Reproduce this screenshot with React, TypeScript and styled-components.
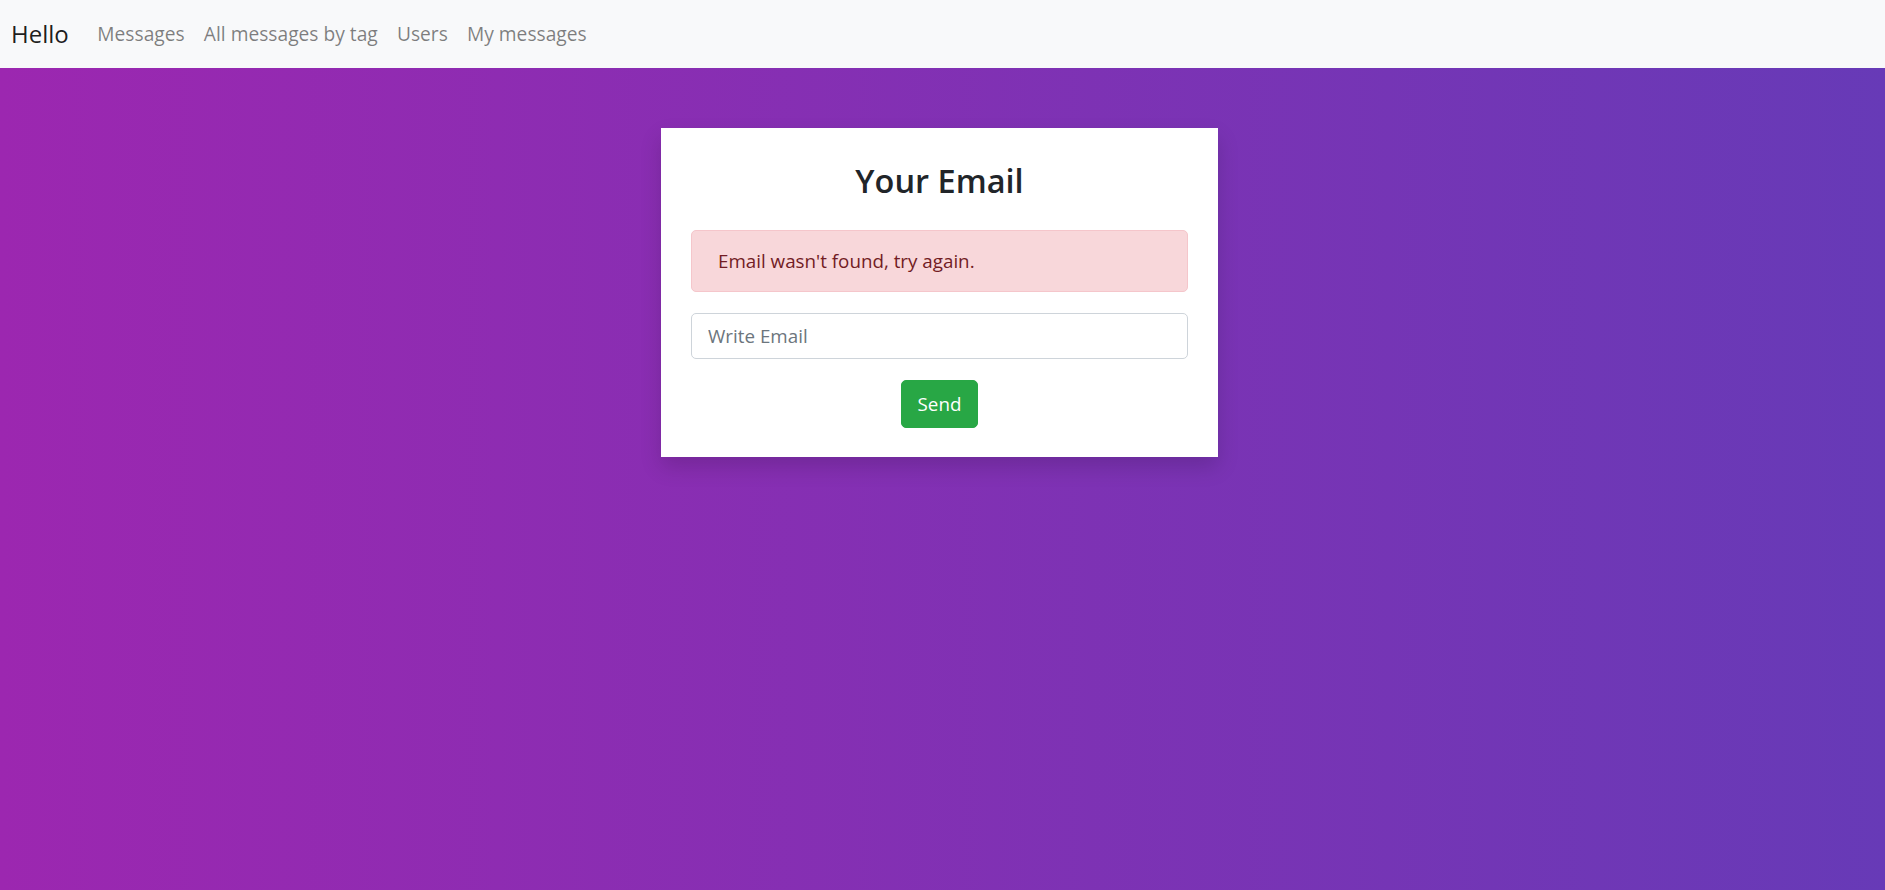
import React from "react";
import styled, { createGlobalStyle } from "styled-components";

const FONT = `"Open Sans", "Noto Sans", "Liberation Sans", sans-serif`;

const GlobalStyle = createGlobalStyle`
  html, body {
    margin: 0;
    padding: 0;
  }
  body {
    font-family: ${FONT};
    min-height: 100vh;
    background: linear-gradient(to right, #9c27b0, #673ab7);
  }
  * { box-sizing: border-box; }
`;

const Page = styled.div`
  min-height: 100vh;
  display: flex;
  flex-direction: column;
`;

const Navbar = styled.nav`
  height: 68px;
  background: #f8f9fa;
  display: flex;
  align-items: center;
  padding: 0 11px;
`;

const Brand = styled.a`
  font-size: 24px;
  color: rgba(0, 0, 0, 0.9);
  text-decoration: none;
  margin-right: 19px;
  line-height: 1;
`;

const NavList = styled.div`
  display: flex;
  align-items: center;
`;

const NavLink = styled.a`
  font-size: 19.2px;
  color: rgba(0, 0, 0, 0.5);
  text-decoration: none;
  padding: 0 9.6px;
  line-height: 1;
`;

const Main = styled.main`
  display: flex;
  justify-content: center;
  padding: 60px 6px 0 0;
`;

const Card = styled.section`
  width: 557px;
  background: #fff;
  box-shadow: 0 10px 20px rgba(0, 0, 0, 0.15);
  padding: 0 30px 29px;
  display: flex;
  flex-direction: column;
  align-items: stretch;
`;

const Title = styled.h2`
  margin: 30px 0 26px;
  font-size: 32.5px;
  font-weight: 600;
  line-height: 46px;
  color: #212529;
  text-align: center;
`;

const Alert = styled.div`
  height: 62px;
  display: flex;
  align-items: center;
  padding: 0 26px;
  background: #f8d7da;
  border: 1px solid #f5c6cb;
  border-radius: 5px;
  color: #721c24;
  font-size: 18.8px;
`;

const Input = styled.input`
  margin-top: 21px;
  height: 46px;
  border: 1px solid #ced4da;
  border-radius: 5px;
  padding: 0 16px;
  font-family: ${FONT};
  font-size: 18.8px;
  color: #495057;
  outline: none;
  &::placeholder {
    color: #6c757d;
  }
`;

const Actions = styled.div`
  margin-top: 21px;
  display: flex;
  justify-content: center;
`;

const Button = styled.button`
  height: 48px;
  width: 77px;
  padding: 0;
  background: #28a745;
  border: 1px solid #28a745;
  border-radius: 5px;
  color: #fff;
  font-family: ${FONT};
  font-size: 18.8px;
  cursor: pointer;
`;

export default function App() {
  return (
    <Page>
      <GlobalStyle />
      <Navbar>
        <Brand href="#">Hello</Brand>
        <NavList>
          <NavLink href="#">Messages</NavLink>
          <NavLink href="#">All messages by tag</NavLink>
          <NavLink href="#">Users</NavLink>
          <NavLink href="#">My messages</NavLink>
        </NavList>
      </Navbar>
      <Main>
        <Card>
          <Title>Your Email</Title>
          <Alert>Email wasn't found, try again.</Alert>
          <Input type="email" placeholder="Write Email" />
          <Actions>
            <Button type="button">Send</Button>
          </Actions>
        </Card>
      </Main>
    </Page>
  );
}
